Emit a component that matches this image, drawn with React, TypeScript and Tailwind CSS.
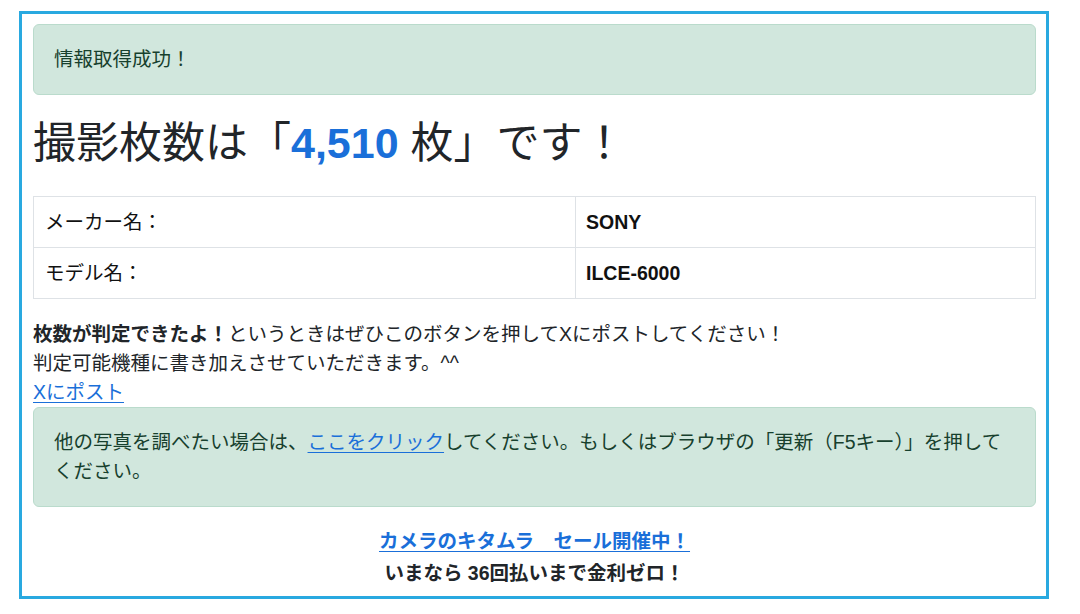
import React from "react";

const FONT = { fontFamily: '"Liberation Sans", "Noto Sans CJK JP", sans-serif' };

export default function App() {
  return (
    <div className="w-[1080px] h-[614px] bg-white overflow-hidden" style={FONT}>
      <div className="ml-[19px] mt-[11px] w-[1030px] h-[588px] border-[3px] border-[#29a9e0] pl-[11px] pr-[10px] pt-[10px] text-[#212529]">
        <div className="rounded-[6px] border border-[#badbcc] bg-[#d1e7dd] px-[20px] py-[20px] text-[19.5px] leading-[29px] text-[#17402d]">
          情報取得成功！
        </div>

        <h1 className="mt-[23px] text-[43px] leading-[50px] font-normal text-[#212529]">
          撮影枚数は「<span className="font-bold text-[#1a6fd9]">4,510</span> 枚」です！
        </h1>

        <table className="mt-[28px] w-full border-collapse text-[19.5px] leading-[26px] text-[#111]">
          <tbody>
            <tr>
              <td className="w-[542px] border border-[#dee2e6] px-[11px] py-[12px]">メーカー名：</td>
              <td className="border border-[#dee2e6] px-[10px] py-[12px] font-bold">SONY</td>
            </tr>
            <tr>
              <td className="w-[542px] border border-[#dee2e6] px-[11px] py-[12px]">モデル名：</td>
              <td className="border border-[#dee2e6] px-[10px] py-[12px] font-bold">ILCE-6000</td>
            </tr>
          </tbody>
        </table>

        <div className="mt-[21px] text-[19.5px] leading-[29px]">
          <p>
            <b>枚数が判定できたよ！</b>というときはぜひこのボタンを押してXにポストしてください！
            <br />
            判定可能機種に書き加えさせていただきます。^^
          </p>
          <a href="#" className="text-[#1a6fd9] underline underline-offset-[3px]">Xにポスト</a>
        </div>

        <div className="rounded-[6px] border border-[#badbcc] bg-[#d1e7dd] px-[20px] py-[20px] text-[19.5px] leading-[29px] text-[#17402d]">
          他の写真を調べたい場合は、
          <a href="#" className="text-[#1a6fd9] underline underline-offset-[3px]">ここをクリック</a>
          してください。もしくはブラウザの「更新（F5キー）」を押してください。
        </div>

        <div className="mt-[19px] text-center text-[19.5px] leading-[30px] font-bold">
          <a href="#" className="text-[#1a6fd9] underline underline-offset-[3px]">カメラのキタムラ　セール開催中！</a>
          <div className="mt-[2px] text-[#212529]">いまなら 36回払いまで金利ゼロ！</div>
        </div>
      </div>
    </div>
  );
}
